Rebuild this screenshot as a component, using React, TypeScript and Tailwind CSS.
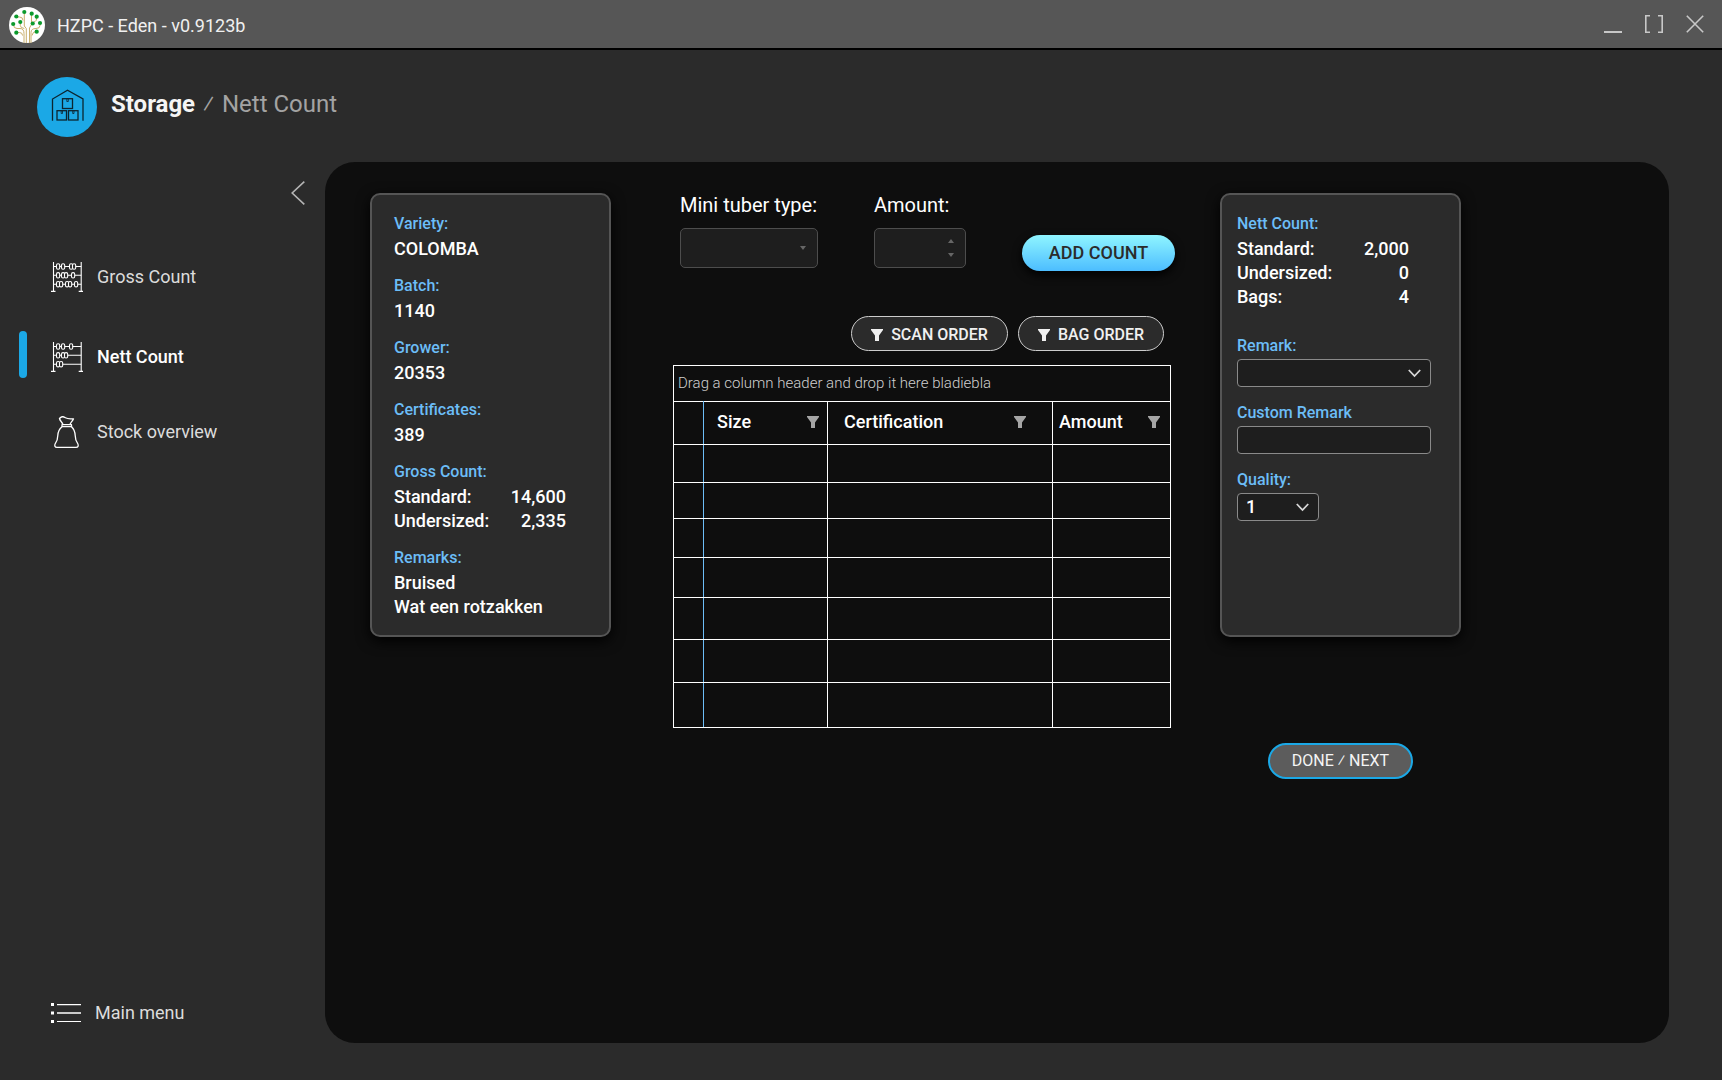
import React, { useState } from 'react';
import clsx from 'clsx';

const GROSS_BEADS = [
  [7, 12, 20, 23],
  [7, 12, 15, 22],
  [7, 10, 16, 19, 25],
];

const NETT_BEADS = [
  [7, 12, 20],
  [7, 12, 15],
  [7, 10],
];

const ROW_HEIGHTS = ['h-[38px]', 'h-[36px]', 'h-[39px]', 'h-[40px]', 'h-[42px]', 'h-[43px]', 'h-[45px]'];

function TreeLogo() {
  const leaves = [
    [15.3, 5], [22.7, 6.7], [7.3, 9.5], [27.7, 9.7], [4.2, 17],
    [11.3, 15], [23.7, 16.5], [31, 16], [7.3, 25.7], [27.7, 24.7],
  ];
  return (
    <svg className="size-9" viewBox="0 0 36 36" aria-hidden="true">
      <circle cx="18" cy="18" r="18" fill="#fff" />
      <g fill="none" stroke="#c9ae6c" strokeWidth="1">
        <path d="M15.3 5v14l2 2.5V36M20.5 36V21l2-3.5V7" />
        <path d="M7.5 10h3q3.500 0 3.500 3.500M11.3 15v3.500q0 2.500 4 3M4.500 17.500q0 4 3.500 4h3q4 0 4 5V36M7.500 25.500h3q3 0 3 3" />
        <path d="M27.500 10v2q0 3-5 3.500M31 16.500v2q0 3-4 3-5 0-5 4V36M27.500 24.500q-4 0-4.500 4" />
      </g>
      {leaves.map(([cx, cy]) => (
        <circle key={`${cx}-${cy}`} cx={cx} cy={cy} r="2.1" fill="#0b9a2d" />
      ))}
    </svg>
  );
}

function WarehouseIcon() {
  return (
    <svg className="size-[60px]" viewBox="0 0 60 60" fill="none" stroke="#0c2530" strokeWidth="1.3" aria-hidden="true">
      <path d="M15.5 43.700V22L30.500 13.200 46 22v21.700" />
      <rect x="25.5" y="21.7" width="10" height="9.8" />
      <rect x="20" y="33.7" width="9.5" height="9.3" />
      <rect x="31.5" y="33.7" width="9.5" height="9.3" />
      <path d="M29.8 21.700v2.800h1.500v-2.800M24.200 33.700v2.800h1.300v-2.800M35.700 33.700v2.800h1.300v-2.800" strokeWidth="0.8" />
    </svg>
  );
}

function AbacusIcon({ beads }: { beads: number[][] }) {
  return (
    <svg className="h-[30px] w-8" viewBox="0 0 32 30" fill="none" stroke="#fff" strokeWidth="1.1" aria-hidden="true">
      <path d="M2.500 0v29M30.200 0v29M0 29.400h4.500M27.700 29.400h4.500" />
      <path d="M2.500 4.500h27.700M2.500 13.300h27.700M2.500 22.200h27.700" />
      {beads.map((row, r) =>
        row.map((x) => (
          <rect key={`${r}-${x}`} x={x - 1.5} y={1.8 + r * 8.85} width="3.2" height="5.4" rx="1.5" fill="#2b2b2b" />
        ))
      )}
    </svg>
  );
}

function BagIcon() {
  return (
    <svg className="size-8" viewBox="0 0 32 32" fill="none" stroke="#fff" strokeWidth="1.3" strokeLinejoin="round" aria-hidden="true">
      <path d="M12 8.500C11 6 9 5 8.500 2.500c1.500-2 4-2.200 6-.7 2.500 1.500 4.500 1 8 1-1 2.500-3 3.500-3.500 5.700" />
      <path d="M11 8.700h9.500v2H11z" />
      <path d="M11 10.700C7.500 13.500 7 15.500 6.800 19.500c-.1 4-.6 5.500-2.400 7.800-1.300 2.400-.6 4 1.600 4h19c2.200 0 2.900-1.600 1.600-4-1.800-2.300-2.300-3.800-2.400-7.800-.2-4-.7-6-3.700-8.800" />
    </svg>
  );
}

function MenuIcon() {
  return (
    <svg className="h-5 w-[30px]" viewBox="0 0 30 20" fill="#fff" aria-hidden="true">
      <path d="M0 0h3v3H0zM0 8.500h3v3H0zM0 17h3v3H0zM6 1h24v1.200H6zM6 9.200h24v1.500H6zM6 17.900h24v1.200H6z" />
    </svg>
  );
}

function FunnelIcon({ className }: { className?: string }) {
  return (
    <svg className={clsx('size-3 shrink-0', className)} viewBox="0 0 12 12" fill="currentColor" aria-hidden="true">
      <path d="M0 0h12v1L8 6.500V12H4V6.500L0 1z" />
    </svg>
  );
}

function ChevronDown() {
  return (
    <svg className="pointer-events-none absolute right-2.5 top-2.5 h-[9px] w-[13px]" viewBox="0 0 13 9" fill="none" stroke="#d8d8d8" strokeWidth="1.8" aria-hidden="true">
      <path d="M.8 1l5.700 6 5.700-6" />
    </svg>
  );
}

function NavItem({ label, icon, active, className }: { label: string; icon: React.ReactNode; active?: boolean; className?: string }) {
  return (
    <li className={clsx('relative', className)}>
      {active && <span className="absolute -top-0.5 left-[19px] h-[47px] w-2 rounded-full bg-[#1ba8e6]" />}
      <a
        href="#"
        aria-current={active ? 'page' : undefined}
        className={clsx('flex h-12 items-center gap-3.5 pl-[51px] text-lg', active ? 'font-medium text-white' : 'text-[#dcdcdc]')}
      >
        {icon}
        {label}
      </a>
    </li>
  );
}

function Section({ label, children }: { label: string; children: React.ReactNode }) {
  return (
    <div>
      <h3 className="text-base/[26px] font-medium text-[#6cbdf7]">{label}</h3>
      <div className="text-lg/6 font-medium text-white">{children}</div>
    </div>
  );
}

function CountRow({ label, value }: { label: string; value: string }) {
  return (
    <p className="flex w-[172px] justify-between">
      <span>{label}</span>
      <span>{value}</span>
    </p>
  );
}

export default function App() {
  const [tuberType, setTuberType] = useState('');
  const [amount, setAmount] = useState('');
  const [remark, setRemark] = useState('');
  const [customRemark, setCustomRemark] = useState('');
  const [quality, setQuality] = useState('1');

  const card = 'rounded-[10px] border-2 border-[#555] bg-[#2b2b2b] py-4 shadow-[0_4px_14px_#000]';
  const field = 'h-7 appearance-none rounded border border-[#8a8a8a] bg-[#1e1e1e] text-lg/6 font-medium text-white';
  const fieldLabel = 'block text-base/[26px] font-medium text-[#6cbdf7]';
  const pill = 'flex h-[35px] items-center justify-center gap-2 rounded-full border border-[#ccc] bg-[#2b2b2b] pt-0.5 text-base font-medium text-[#f0f0f0]';

  return (
    <div className="flex min-h-screen flex-col bg-[#2b2b2b] font-['Roboto',sans-serif]">
      <div className="flex h-[50px] items-center gap-3 border-b-2 border-black bg-[#565656] pl-[9px] pr-[18px] pt-0.5">
        <TreeLogo />
        <span className="pt-0.5 text-lg text-[#f0f0f0]">HZPC - Eden - v0.9123b</span>
        <div className="ml-auto flex items-center gap-[23px] pb-0.5">
          <button aria-label="Minimize">
            <svg className="size-[18px]" viewBox="0 0 18 18" fill="none" stroke="#c8c8c8" strokeWidth="2"><path d="M0 17h18" /></svg>
          </button>
          <button aria-label="Maximize">
            <svg className="size-[18px]" viewBox="0 0 18 18" fill="none" stroke="#c8c8c8" strokeWidth="1.6"><path d="M5 .8H.8v16.400H5M13 .8h4.200v16.400H13" /></svg>
          </button>
          <button aria-label="Close">
            <svg className="size-[18px]" viewBox="0 0 18 18" fill="none" stroke="#c8c8c8" strokeWidth="1.6"><path d="M.8.8l16.400 16.400M17.200.8L.8 17.200" /></svg>
          </button>
        </div>
      </div>

      <header className="flex h-28 items-center gap-3.5 pl-[37px] pt-0.5">
        <div className="rounded-full bg-[#1ba8e6]">
          <WarehouseIcon />
        </div>
        <h1 className="flex items-center gap-2 pb-1.5 text-2xl text-[#a3a3a3]">
          <span className="font-bold text-[#f5f5f5]">Storage</span>
          <span>⁄</span>
          <span>Nett Count</span>
        </h1>
      </header>

      <div className="flex flex-1 pb-[37px] pr-[53px]">
        <aside className="flex w-[325px] shrink-0 flex-col">
          <button aria-label="Collapse menu" className="mr-5 mt-[19px] self-end">
            <svg className="h-6 w-3.5" viewBox="0 0 14 24" fill="none" stroke="#b4b4b4" strokeWidth="1.6">
              <path d="M13.300.7L1.200 12l12.100 11.300" />
            </svg>
          </button>
          <ul className="mt-12 flex flex-1 flex-col">
            <NavItem label="Gross Count" icon={<AbacusIcon beads={GROSS_BEADS} />} className="mb-8" />
            <NavItem label="Nett Count" icon={<AbacusIcon beads={NETT_BEADS} />} className="mb-[27px]" active />
            <NavItem label="Stock overview" icon={<BagIcon />} />
            <NavItem label="Main menu" icon={<MenuIcon />} className="mb-1.5 mt-auto" />
          </ul>
        </aside>

        <main className="grid flex-1 grid-cols-[241px_minmax(0,498px)_241px] items-start rounded-[30px] bg-[#0e0e0e] pl-[45px] pt-[31px]">
          <section className={clsx(card, 'flex flex-col gap-3 pl-[22px]')}>
            <Section label="Variety:">COLOMBA</Section>
            <Section label="Batch:">1140</Section>
            <Section label="Grower:">20353</Section>
            <Section label="Certificates:">389</Section>
            <Section label="Gross Count:">
              <CountRow label="Standard:" value="14,600" />
              <CountRow label="Undersized:" value="2,335" />
            </Section>
            <Section label="Remarks:">
              <p>Bruised</p>
              <p>Wat een rotzakken</p>
            </Section>
          </section>

          <section className="ml-[62px] w-[498px]">
            <form className="flex items-end gap-14 pl-[7px]" onSubmit={(e) => e.preventDefault()}>
              <div className="shrink-0 pb-[3px]">
                <label htmlFor="tuber-type" className="mb-[11px] block text-xl/6 text-white">Mini tuber type:</label>
                <div className="relative">
                  <select
                    id="tuber-type"
                    value={tuberType}
                    onChange={(e) => setTuberType(e.target.value)}
                    className="block h-10 w-[138px] appearance-none rounded-[5px] border border-[#4d4d4d] bg-[#1e1e1e] px-3 text-white"
                  >
                    <option value=""></option>
                  </select>
                  <svg className="pointer-events-none absolute right-3 top-[18px] h-1 w-1.5" viewBox="0 0 6 4" fill="#666"><path d="M0 0h6L3 4z" /></svg>
                </div>
              </div>
              <div className="shrink-0 pb-[3px]">
                <label htmlFor="amount" className="mb-[11px] block text-xl/6 text-white">Amount:</label>
                <div className="relative">
                  <input
                    id="amount"
                    type="text"
                    inputMode="numeric"
                    value={amount}
                    onChange={(e) => setAmount(e.target.value)}
                    className="block h-10 w-[92px] rounded-[5px] border border-[#4d4d4d] bg-[#1e1e1e] px-3 text-white"
                  />
                  <svg className="pointer-events-none absolute right-3 top-[11px] h-[18px] w-1.5" viewBox="0 0 6 18" fill="#666">
                    <path d="M0 4h6L3 0zM0 14h6l-3 4z" />
                  </svg>
                </div>
              </div>
              <button className="h-9 w-[153px] shrink-0 rounded-full bg-linear-to-b from-[#8ff5ff] to-[#4cbdff] text-lg font-medium text-[#2b2b2b] shadow-[0_4px_10px_#000]">
                ADD COUNT
              </button>
            </form>

            <div className="mt-[45px] flex justify-end gap-2.5 pr-[7px]">
              <button className={clsx(pill, 'w-[157px]')}>
                <FunnelIcon />
                SCAN ORDER
              </button>
              <button className={clsx(pill, 'w-[146px]')}>
                <FunnelIcon />
                BAG ORDER
              </button>
            </div>

            <div className="mt-3.5 flex h-9 items-center border border-b-0 border-white pl-1 text-[15px] font-light text-[#d0d0d0]">
              Drag a column header and drop it here bladiebla
            </div>
            <table className="w-full table-fixed border-collapse text-lg/6 text-white">
              <colgroup>
                <col className="w-[30px]" />
                <col className="w-[124px]" />
                <col className="w-[225px]" />
                <col className="w-[118px]" />
              </colgroup>
              <thead>
                <tr className="h-[43px]">
                  <th className="border border-white border-r-[#6cbdf7]"></th>
                  <th className="border border-white border-l-[#6cbdf7] p-0 pb-0.5 pl-[13px] pr-2 text-left font-medium">
                    <span className="flex items-center justify-between">Size <FunnelIcon className="text-[#a5a5a5]" /></span>
                  </th>
                  <th className="border border-white p-0 pb-0.5 pl-4 pr-[26px] text-left font-medium">
                    <span className="flex items-center justify-between">Certification <FunnelIcon className="text-[#a5a5a5]" /></span>
                  </th>
                  <th className="border border-white p-0 pb-0.5 pl-1.5 pr-2.5 text-left font-medium">
                    <span className="flex items-center justify-between">Amount <FunnelIcon className="text-[#a5a5a5]" /></span>
                  </th>
                </tr>
              </thead>
              <tbody>
                {ROW_HEIGHTS.map((height) => (
                  <tr key={height} className={height}>
                    <td className="border border-white border-r-[#6cbdf7]"></td>
                    <td className="border border-white border-l-[#6cbdf7]"></td>
                    <td className="border border-white"></td>
                    <td className="border border-white"></td>
                  </tr>
                ))}
              </tbody>
            </table>
          </section>

          <section className="ml-[111px] flex w-[241px] flex-col items-center">
            <div className={clsx(card, 'flex min-h-[444px] w-full flex-col gap-[13px] pl-[15px]')}>
              <div className="mb-[11px]">
                <Section label="Nett Count:">
                  <CountRow label="Standard:" value="2,000" />
                  <CountRow label="Undersized:" value="0" />
                  <CountRow label="Bags:" value="4" />
                </Section>
              </div>
              <div>
                <label htmlFor="remark" className={fieldLabel}>Remark:</label>
                <div className="relative w-[194px]">
                  <select id="remark" value={remark} onChange={(e) => setRemark(e.target.value)} className={clsx(field, 'block w-full pl-2')}>
                    <option value=""></option>
                  </select>
                  <ChevronDown />
                </div>
              </div>
              <div>
                <label htmlFor="custom-remark" className={fieldLabel}>Custom Remark</label>
                <input
                  id="custom-remark"
                  value={customRemark}
                  onChange={(e) => setCustomRemark(e.target.value)}
                  className={clsx(field, 'block w-[194px] px-2')}
                />
              </div>
              <div>
                <label htmlFor="quality" className={fieldLabel}>Quality:</label>
                <div className="relative w-[82px]">
                  <select id="quality" value={quality} onChange={(e) => setQuality(e.target.value)} className={clsx(field, 'block w-full pl-2')}>
                    <option>1</option>
                    <option>2</option>
                    <option>3</option>
                  </select>
                  <ChevronDown />
                </div>
              </div>
            </div>
            <button className="mt-[106px] h-9 w-[145px] rounded-full border-2 border-[#1ba8e6] bg-[#5c5c5c] text-base text-[#f5f5f5]">
              DONE ⁄ NEXT
            </button>
          </section>
        </main>
      </div>
    </div>
  );
}
